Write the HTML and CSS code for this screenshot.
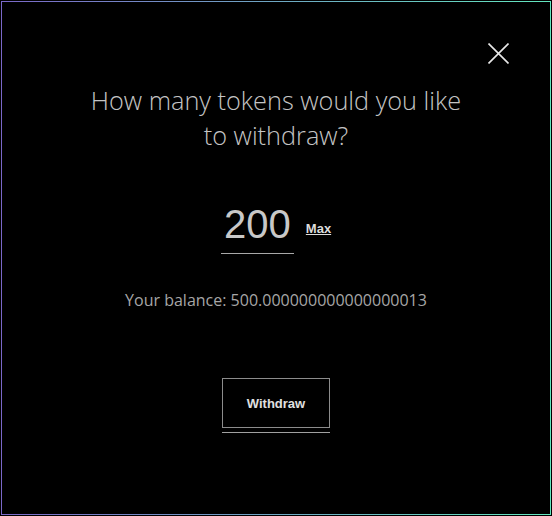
FILE: index.html
```html
<!DOCTYPE html>
<html>
<head>
<meta charset="utf-8">
<link rel="stylesheet" href="styles.css">
</head>
<body>
<div class="frame">
  <div class="modal">
    <button class="close" aria-label="Close">
      <svg width="21" height="21" viewBox="0 0 21 21"><path d="M0.5 0.5 L20.5 20.5 M20.5 0.5 L0.5 20.5" stroke="#e8e8e8" stroke-width="1.6" fill="none"/></svg>
    </button>
    <h1 class="title">How many tokens would you like to withdraw?</h1>
    <div class="amount-row">
      <div class="amount">200</div>
      <a class="max" href="#">Max</a>
    </div>
    <p class="balance">Your balance: 500.000000000000000013</p>
    <div class="action">
      <button class="withdraw">Withdraw</button>
    </div>
  </div>
</div>
</body>
</html>
```
FILE: styles.css
```css
html, body {
  margin: 0;
  padding: 0;
  background: #000;
}
.frame {
  width: 552px;
  height: 516px;
  padding: 1px;
  box-sizing: border-box;
  background: #000;
}
.modal {
  position: relative;
  height: 100%;
  box-sizing: border-box;
  border: 1px solid;
  border-image: linear-gradient(to right, #7a68c8, #62e6be) 1;
  display: flex;
  flex-direction: column;
  align-items: center;
  padding-top: 81px;
}
.close {
  position: absolute;
  top: 41px;
  right: 41px;
  width: 21px;
  height: 21px;
  padding: 0;
  border: 0;
  background: none;
  display: flex;
}
.title {
  margin: 0;
  width: 385px;
  text-align: center;
  font-family: "Open Sans", sans-serif;
  font-weight: 300;
  font-size: 25.3px;
  line-height: 35px;
  color: #c4c4c4;
}
.amount-row {
  display: flex;
  align-items: flex-start;
  margin-top: 48px;
  gap: 12px;
}
.amount {
  width: 73px;
  box-sizing: border-box;
  text-align: center;
  font-family: "Liberation Sans", Arial, sans-serif;
  font-size: 40px;
  line-height: 46px;
  color: #c8c8c8;
  padding-bottom: 6px;
  border-bottom: 1px solid #a8a8a8;
}
.max {
  margin-top: 20px;
  font-family: "Liberation Sans", Arial, sans-serif;
  font-weight: bold;
  font-size: 13px;
  color: #dcdcdc;
  text-decoration: underline;
}
.balance {
  margin: 35px 0 0;
  font-family: "Open Sans", sans-serif;
  font-size: 16px;
  line-height: 22px;
  color: #a6a6a6;
}
.action {
  margin-top: 67px;
  padding-bottom: 4px;
  border-bottom: 1px solid #a0a0a0;
}
.withdraw {
  display: block;
  width: 108px;
  height: 50px;
  box-sizing: border-box;
  background: #000;
  border: 1px solid #8c8c8c;
  font-family: "Liberation Sans", Arial, sans-serif;
  font-weight: bold;
  font-size: 13px;
  color: #e0e0e0;
  cursor: pointer;
}
```
